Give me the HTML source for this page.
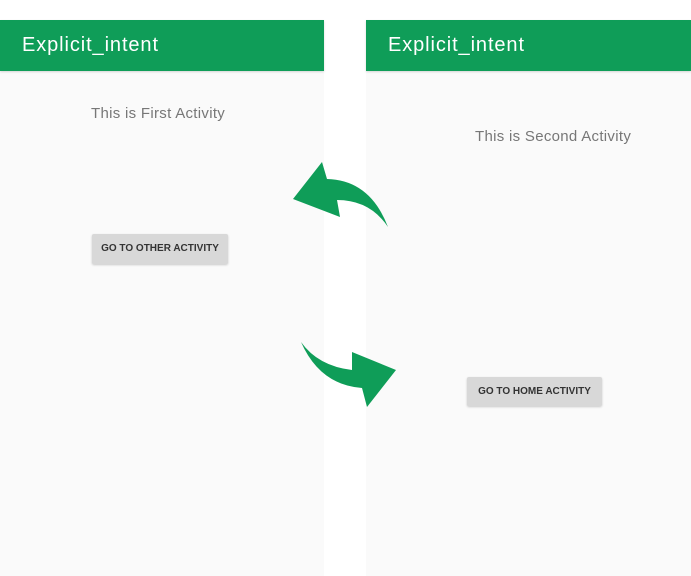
<!DOCTYPE html>
<html><head><style>
body{margin:0;width:691px;height:576px;background:#fff;position:relative;overflow:hidden;font-family:"Liberation Sans",sans-serif}
.p{position:absolute;top:20px;height:556px;background:#fafafa}
.h{height:51px;background:#0f9d58;color:#fff;font-size:20px;letter-spacing:0.9px;line-height:51px;padding-left:22px;box-shadow:0 1px 2px rgba(0,0,0,.15)}
.t{position:absolute;color:#777;font-size:15px;letter-spacing:0.3px;white-space:nowrap}
.b{position:absolute;background:#d8d8d8;color:#333;font-size:10px;font-weight:bold;text-align:center;border-radius:2px;box-shadow:0 1px 2px rgba(0,0,0,.2)}
</style></head><body>
<div class="p" style="left:0;width:324px"><div class="h">Explicit_intent</div>
<div class="t" style="left:91px;top:85px">This is First Activity</div>
<div class="b" style="left:92px;top:214px;width:136px;height:30px;line-height:30px">GO TO OTHER ACTIVITY</div></div>
<div class="p" style="left:366px;width:325px"><div class="h">Explicit_intent</div>
<div class="t" style="left:109px;top:108px">This is Second Activity</div>
<div class="b" style="left:101px;top:357px;width:135px;height:29px;line-height:29px">GO TO HOME ACTIVITY</div></div>
<svg style="position:absolute;left:0;top:0" width="691" height="576">
<path fill="#0f9d58" d="M293,199 L322,162 L327,179 Q370,180 388,227 Q370,200 337,200 L340,217 Z"/>
<path fill="#0f9d58" d="M301,342 Q318,366 352,370 L352,352 L396,370 L367,407 L362,388 Q320,385 301,342 Z"/>
</svg>
</body></html>
